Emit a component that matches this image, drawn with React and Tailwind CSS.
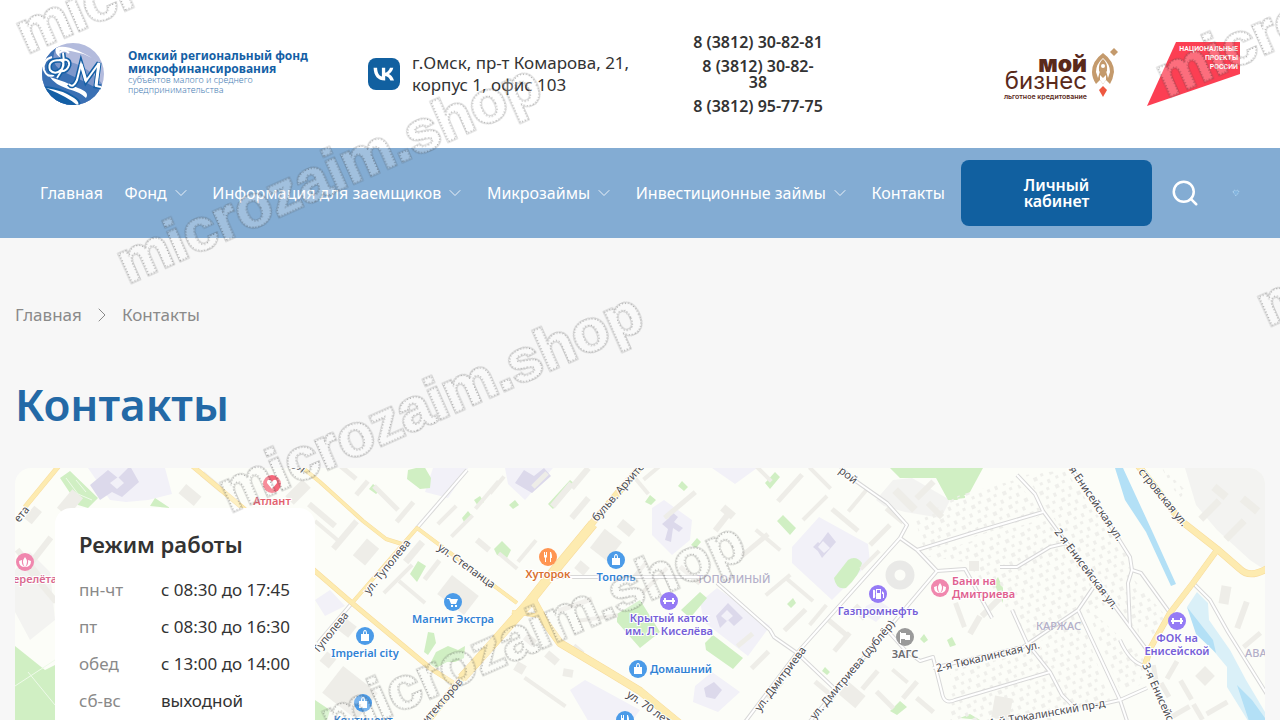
import { ChevronDown, ChevronRight, Search } from "lucide-react";

const menu = [
  { title: "Главная" },
  { title: "Фонд", sub: true },
  { title: "Информация для заемщиков", sub: true },
  { title: "Микрозаймы", sub: true },
  { title: "Инвестиционные займы", sub: true },
  { title: "Контакты" },
];

const schedule = [
  ["пн-чт", "с 08:30 до 17:45"],
  ["пт", "с 08:30 до 16:30"],
  ["обед", "с 13:00 до 14:00"],
  ["сб-вс", "выходной"],
];

// Map data: every point is in the map's own units
const yellowRoads = [
  { d: "M62 462L25 507", w: 5 },
  { d: "M190 464L243 508L315 571L352 603L430 668L458 686", w: 5 },
  { d: "M298 464L320 482L363 521L386 539L402 544", w: 4 },
  { d: "M352 603L417 528L517 603", w: 4 },
  { d: "M646 460L593 522L550 576L527 603L487 650L460 680L425 724", w: 7 },
  { d: "M593 524L550 576L527 605L487 650L462 678", w: 10 },
  { d: "M533 600L545 622L560 643L607 671L640 691L685 728", w: 8 },
  { d: "M512 612L540 616", w: 4 },
  { d: "M1137 464L1180 520L1217 549L1240 569Q1250 579 1268 568", w: 7 },
  { d: "M1217 550L1193 583L1170 613L1151 647L1145 665", w: 6 },
];

const whiteRoads = [
  "M467 470L417 528",
  "M352 603L318 643",
  "M553 577H705",
  "M840 466L850 477L887 503L907 525L900 538L797 653L742 726",
  "M900 538L917 550L937 571L965 569L992 618",
  "M917 550L975 532L1043 512",
  "M937 571L887 630L806 726",
  "M717 583L770 630L774 637L797 653L836 690",
  "M887 630L905 650L920 661L933 657L942 693Q944 705 955 700L1050 672",
  "M933 668L1023 647L1078 610L1093 588",
  "M1017 475L1035 494L1043 511L1057 530L1110 600L1147 650",
  "M1000 567H1017L1050 547L1067 543",
  "M1070 466L1115 533L1130 557L1132 570L1128 583L1130 628",
  "M1132 570L1141 573L1170 613",
  "M1078 610L1120 700L1128 724",
  "M1012 610L1027 643L1050 672L1062 695L1075 708",
  "M1085 708L1120 700L1147 688",
  "M1193 583L1210 600L1228 632L1268 696",
  "M1120 640Q1130 663 1145 666",
];

const parks = [
  "M60 478L70 471L98 498L88 508L78 505Z",
  "M150 506L155 498L170 508Z",
  "M408 470L424 466L431 478L430 488L420 489L407 479Z",
  "M369 489L373 484L381 490L376 494Z",
  "M548 504L570 480L575 484L553 509Z",
  "M462 518L468 511L472 516L464 522Z",
  "M474 500L480 496L484 502L478 506Z",
  "M494 549L502 541L511 550L507 558L497 555Z",
  "M410 574L418 561L426 566L417 582Z",
  "M424 652L428 632L434 633L436 643L428 655Z",
  "M430 664L436 652L448 646L458 650L465 646L464 658L455 662L447 662L436 668Z",
  "M509 505L515 500L519 505L513 509Z",
  "M678 486L682 481L688 487L684 491Z",
  "M765 483L775 472L780 477L770 489Z",
  "M645 502L650 495L656 500L651 505Z",
  "M777 521L783 515L796 528L790 535Z",
  "M834 578L848 560Q856 555 862 563Q860 575 846 588Q836 590 834 578Z",
  "M617 614L640 600L660 632L640 648L617 622Z",
  "M681 610L700 592L707 598L690 618Z",
  "M705 643L713 635L743 658L733 669L706 650Z",
  "M890 468H965V498L948 500L936 478L900 478Z",
  "M940 468H983L970 492L957 500L948 496Z",
  "M787 604L793 598L796 603L791 608Z",
  "M691 545L697 538L701 542L696 548Z",
  "M920 639L924 634L928 640L924 643Z",
  "M822 671L825 667L830 672L827 675Z",
  "M890 711L900 701L907 707L897 715Z",
  "M947 640L952 637L956 645L950 647Z",
  "M994 583L998 577L1003 588V603L997 590Z",
  "M15 646L45 670L55 665V724H15Z",
  "M315 700L330 710L326 724H315Z",
  "M960 718L970 714L980 720Z",
];

const lilac = [
  "M88 468H165L172 494L148 500L126 502L110 500Z",
  "M433 468H468L448 498L425 492Z",
  "M505 468H553L525 500L508 484Z",
  "M652 508L664 500L692 520L690 540L672 555L652 535Z",
  "M792 547L819 517L868 544L870 562L832 600L792 563Z",
  "M700 602L717 588L770 626L748 656L704 622Z",
  "M712 468H757L735 484Z",
  "M695 686L712 672L740 692L718 712L693 702Z",
  "M866 606L878 600L890 608L876 622L863 614Z",
  "M315 600L330 590L345 606L325 616Z",
  "M570 690L585 680L640 710L630 724H590Z",
];

const greyLand = [
  "M876 500L893 480L912 478L950 500L941 518L905 512L884 506Z",
  "M15 570L30 552L50 572L55 620L30 640L15 612Z",
  "M1185 468H1265V570L1250 560L1217 530L1196 505Z",
];

const lilacBlocks = [
  "M90 485L108 470L118 478L130 466L139 482L122 497L112 492L100 500Z",
  "M515 483L524 470L534 476L544 468L551 476L532 493Z",
  "M662 524L669 518L672 512L678 517L674 522L683 528L679 532L673 528L671 542L665 540L668 529Z",
  "M816 548L828 532L836 542L822 558Z",
  "M813 547L818 542L824 547L819 552Z",
  "M716 616L728 603L743 618L734 626L728 620L720 628Z",
  "M704 688L714 682L722 690L715 699L706 697Z",
];

// x, y, width, height, turn
const blocks = [
  [70, 503, 14, 24, 40], [33, 515, 10, 16, 40], [41, 550, 32, 6, -52], [30, 565, 6, 40, -40], [42, 585, 6, 44, -40],
  [190, 495, 20, 12, 40], [212, 482, 26, 6, 40], [298, 492, 24, 12, -45], [322, 515, 34, 6, 40], [345, 535, 36, 6, -50],
  [343, 468, 34, 5, 40], [362, 488, 5, 18, 40], [386, 498, 34, 5, 45], [405, 512, 5, 26, 40], [366, 552, 22, 16, -50],
  [328, 532, 34, 4, 40], [414, 552, 26, 7, -50], [432, 570, 5, 24, 38], [412, 592, 34, 4, 40], [398, 579, 4, 40, 45],
  [458, 595, 34, 24, 38], [447, 515, 4, 26, 45], [462, 526, 30, 4, -45], [487, 495, 36, 4, -50], [497, 485, 4, 22, 40],
  [483, 545, 16, 6, 40], [508, 561, 4, 24, -50], [527, 551, 28, 4, -50], [540, 480, 20, 5, -45], [562, 495, 30, 6, -50],
  [580, 478, 26, 6, -50], [580, 508, 26, 6, -50], [606, 545, 22, 24, 38], [626, 528, 16, 10, 40], [582, 568, 12, 10, 40],
  [347, 628, 14, 14, 38], [350, 693, 44, 34, 38], [328, 660, 12, 12, 40], [640, 484, 4, 26, -40], [655, 470, 30, 4, -40],
  [680, 505, 40, 5, -40], [728, 512, 14, 8, 40], [722, 522, 6, 22, 38], [760, 470, 4, 32, -45], [790, 488, 36, 5, -48],
  [820, 478, 30, 4, 45], [815, 508, 34, 4, -45], [845, 520, 34, 5, 40], [858, 500, 30, 4, -50], [880, 535, 5, 28, 45],
  [870, 560, 4, 26, 45], [905, 500, 28, 8, 45], [925, 490, 24, 6, -45], [895, 515, 22, 6, 40], [935, 510, 20, 6, 45],
  [755, 545, 5, 34, 50], [768, 540, 32, 4, 40], [778, 585, 32, 4, -40], [800, 590, 34, 4, 40], [795, 620, 5, 30, 45],
  [818, 615, 26, 4, -50], [838, 628, 24, 5, 40], [860, 612, 16, 8, 45], [842, 642, 5, 24, 40], [655, 580, 34, 4, -45],
  [690, 575, 26, 5, 40], [640, 570, 4, 20, 40], [760, 660, 24, 5, -45], [745, 640, 20, 5, -40], [775, 690, 22, 5, -50],
  [825, 690, 26, 5, 40], [852, 695, 22, 16, 40], [870, 680, 24, 5, -50], [885, 700, 24, 5, 45], [910, 690, 22, 5, -50],
  [900, 676, 20, 4, 40], [925, 705, 22, 5, 40], [530, 640, 12, 8, 40], [552, 658, 14, 8, 40], [520, 668, 10, 10, 30],
  [568, 673, 10, 8, 10], [578, 650, 12, 6, 40], [545, 692, 50, 4, 35], [598, 618, 40, 4, -8], [575, 605, 36, 5, -20],
  [960, 615, 5, 26, -20], [975, 625, 6, 20, 30], [991, 607, 26, 6, -45], [974, 566, 10, 10, 0], [1002, 708, 18, 22, 10],
  [1210, 510, 26, 7, -45], [1235, 530, 26, 7, -45], [1220, 492, 16, 8, 40], [1250, 505, 20, 8, 40], [1242, 615, 6, 28, 20],
  [1252, 640, 22, 5, -40], [1225, 595, 10, 18, 10], [1172, 670, 20, 5, -60], [1186, 690, 22, 5, 60], [1205, 676, 14, 14, 45],
  [1165, 690, 16, 5, 60], [1180, 712, 22, 5, -30], [1217, 708, 24, 5, -30], [1155, 675, 5, 20, -10], [1198, 712, 18, 5, 60],
];

const streets = [
  { t: "ета", x: 19, y: 523, a: -50 },
  { t: "ул", x: 293, y: 466, a: 40 },
  { t: "ул. Туполева", x: 369, y: 595, a: -51 },
  { t: "Туполева", x: 318, y: 654, a: -51 },
  { t: "ул. Степанца", x: 437, y: 549, a: 36 },
  { t: "бульв. Архитекторов", x: 597, y: 522, a: -49 },
  { t: "Архитекторов", x: 415, y: 738, a: -49 },
  { t: "ул. 70 лет Октября", x: 626, y: 696, a: 35 },
  { t: "ул. Дмитриева", x: 760, y: 712, a: -53 },
  { t: "ул. Дмитриева (дублёр)", x: 815, y: 720, a: -50 },
  { t: "2-я Тюкалинская ул.", x: 937, y: 672, a: -13 },
  { t: "2-я Енисейская ул.", x: 1054, y: 532, a: 53 },
  { t: "3-я Енисейская ул.", x: 1063, y: 461, a: 56 },
  { t: "стровская ул.", x: 1138, y: 472, a: 51 },
  { t: "3-я Енисейская ул.", x: 1142, y: 665, a: 66 },
  { t: "1-й Тюкалинский пр-д", x: 990, y: 727, a: -10 },
  { t: "рой", x: 838, y: 472, a: 38 },
];

const places = [
  { x: 272, y: 484, c: "#f5687a", k: "heart", text: ["Атлант"], tc: "#e3616d" },
  { x: 25, y: 562, c: "#f087ae", k: "lotus", text: ["Перелёта"], tc: "#d9688f", lx: 31 },
  { x: 365, y: 636, c: "#4b9be8", k: "bag", text: ["Imperial city"], tc: "#3182d4" },
  { x: 453, y: 602, c: "#4b9be8", k: "cart", text: ["Магнит Экстра"], tc: "#3182d4" },
  { x: 548, y: 557, c: "#ff9552", k: "food", text: ["Хуторок"], tc: "#d9702f" },
  { x: 616, y: 560, c: "#4b9be8", k: "bag", text: ["Тополь"], tc: "#3182d4" },
  { x: 669, y: 601, c: "#957bf5", k: "gym", text: ["Крытый каток", "им. Л. Киселёва"], tc: "#765fd8" },
  { x: 638, y: 669, c: "#4b9be8", k: "bag", text: ["Домашний"], tc: "#3182d4", side: true },
  { x: 878, y: 594, c: "#957bf5", k: "fuel", text: ["Газпромнефть"], tc: "#765fd8" },
  { x: 905, y: 637, c: "#9a9a9a", k: "flag", text: ["ЗАГС"], tc: "#6c6c70" },
  { x: 940, y: 588, c: "#f087ae", k: "lotus", text: ["Бани на", "Дмитриева"], tc: "#e0608f", side: true },
  { x: 1177, y: 621, c: "#957bf5", k: "gym", text: ["ФОК на", "Енисейской"], tc: "#765fd8" },
  { x: 363, y: 703, c: "#4b9be8", k: "bag", text: ["Континент"], tc: "#3182d4" },
  { x: 625, y: 720, c: "#4b9be8", k: "food", text: [], tc: "#3182d4" },
];

const glyphs = {
  heart: "M0 5L-5 -1Q-5 -5 -2 -4Q-1 -4 0 -2Q1 -4 2 -4Q5 -5 5 -1Z",
  lotus: "M0 -5Q4 0 0 5Q-4 0 0 -5M-3 -2Q-4 3 0 5Q-6 5 -6 -1ZM3 -2Q4 3 0 5Q6 5 6 -1Z",
  bag: "M-4 -2H-2Q-2 -6 0 -6Q2 -6 2 -2H4V5H-4ZM-1 -2H1Q1 -5 0 -5Q-1 -5 -1 -2Z",
  cart: "M-6 -4H-3L-2 -3H5L3 2H-2L-4 -3H-6ZM-2 3H0V5H-2ZM2 3H4V5H2Z",
  food: "M-4 -5H-3V-2H-2V-5H-1V0L-2 1V5H-3V1L-4 0ZM2 -5H3Q4 -3 4 1H3V5H2Z",
  gym: "M-5 -3H-3V-1H3V-3H5V-1H6V1H5V3H3V1H-3V3H-5V1H-6V-1H-5Z",
  fuel: "M-5 -4Q-2 -5 -3 0Q-2 5 -5 4ZM-2 -5H3V5H-2ZM-1 -4V-1H2V-4ZM4 -3L6 -1V4H5V0H4Z",
  flag: "M-5 -5H-4V-4H1V-2H5V3H0V2H-4V6H-5Z",
};

const marks = [[27, 54], [128, 284], [230, 513], [332, 742], [1167, 98], [1268, 327]];

function Place({ place }) {
  const { x, y, c, k, text, tc, side, lx } = place;
  return (
    <g>
      <circle cx={x} cy={y} r="9" fill={c} />
      <path d={glyphs[k]} transform={`translate(${x} ${y})`} fill="#fff" fillRule="evenodd" />
      <g fill={tc} stroke="#fff" strokeWidth="2" paintOrder="stroke" fontSize="11" fontWeight="600">
        {text.map((line, i) => (
          <text
            key={line}
            x={side ? x + 12 : lx || x}
            y={side ? y + 4 - (text.length - 1) * 7 + i * 13 : y + 21 + i * 13}
            textAnchor={side ? "start" : "middle"}
          >
            {line}
          </text>
        ))}
      </g>
    </g>
  );
}

function CityMap() {
  return (
    <svg
      viewBox="15 468 1250 400"
      preserveAspectRatio="xMinYMin slice"
      className="absolute inset-0 h-full w-full font-['Noto_Sans',sans-serif]"
      role="img"
      aria-label="Карта проезда"
    >
      <defs>
        <pattern id="houses" width="17" height="15" patternUnits="userSpaceOnUse" patternTransform="rotate(-24)">
          <path d="M1 2H5V6H1ZM9 1H12V4H9ZM5 9H8V12H5ZM13 9H16V13H13Z" fill="#efefeb" />
        </pattern>
      </defs>
      <rect x="15" y="468" width="1250" height="400" fill="#fcfdf8" />
      <path d={greyLand.join("")} fill="#f3f3f1" />
      <path d={lilac.join("")} fill="#f2f1f8" />
      <path d={parks.join("")} fill="#d0efc3" />
      <path d={lilacBlocks.join("")} fill="#dcd9eb" />
      <path d="M118 477L124 483L117 489L110 483Z" fill="#f2f1f8" />
      <path d="M823 541L830 548L824 553L818 547ZM727 610L733 616L727 621L721 616Z" fill="#f2f1f8" />
      <path d="M66 478L78 494L92 500M76 480L86 492M15 686L55 660M28 672L55 705" fill="none" stroke="#eefae9" strokeWidth="1" />
      <path
        d="M915 520L960 495L1015 480L1045 515L925 552ZM925 556L1045 518L1105 605L1030 640L1000 600L965 562ZM1025 475L1065 470L1130 560L1140 640L1115 600L1055 520ZM950 670L1020 655L1080 615L1110 700L1060 720H950ZM1085 605L1145 660L1140 685L1120 690ZM1130 575L1165 615L1155 640L1136 620ZM1160 465L1185 490L1180 500Z"
        fill="url(#houses)"
      />
      <g fill="#eeede8">
        {blocks.map(([x, y, w, h, a], i) => (
          <rect key={i} x={x - w / 2} y={y - h / 2} width={w} height={h} transform={`rotate(${a} ${x} ${y})`} />
        ))}
      </g>
      <circle cx="900" cy="575" r="10" fill="none" stroke="#e9e9e7" strokeWidth="9" />

      <path d="M1115 468H1123L1153 533L1176 584L1171 586L1146 532L1125 500Z" fill="#b3e0f6" />
      <path d="M1187 607L1197 592L1208 603L1209 620L1230 650L1246 680L1265 712V724H1250L1227 687V667L1207 643Z" fill="#daf0f8" />
      <path d="M1187 607L1213 640L1216 653L1196 634ZM1237 685L1252 700L1265 718V724H1250Z" fill="#b3e0f6" />

      <g fill="none" strokeLinejoin="round">
        {whiteRoads.map((d) => (
          <path key={d} d={d} stroke="#d8d8d8" strokeWidth="4" />
        ))}
        {whiteRoads.map((d) => (
          <path key={d} d={d} stroke="#fff" strokeWidth="2" />
        ))}
        {yellowRoads.map((r) => (
          <path key={r.d} d={r.d} stroke="#f8dc9c" strokeWidth={r.w} />
        ))}
        {yellowRoads.map((r) => (
          <path key={r.d} d={r.d} stroke="#fdebb0" strokeWidth={r.w - 1} />
        ))}
      </g>

      <g fill="#4c4c50" stroke="#fff" strokeWidth="2" paintOrder="stroke" fontSize="11">
        {streets.map((s, i) => (
          <text key={i} transform={`translate(${s.x} ${s.y}) rotate(${s.a})`}>
            {s.t}
          </text>
        ))}
      </g>
      <g fill="#b3afc9" fontSize="11" fontWeight="500">
        <text x="697" y="583">ТОПОЛИНЫЙ</text>
        <text x="1036" y="630">КАРЖАС</text>
        <text x="1245" y="657">АВАНГАРД</text>
      </g>
      {places.map((p) => (
        <Place key={p.x} place={p} />
      ))}
    </svg>
  );
}

function FundLogo() {
  return (
    <svg viewBox="0 0 64 64" className="h-16 w-16 shrink-0" aria-hidden="true">
      <defs>
        <clipPath id="disc">
          <circle cx="33" cy="32" r="31" />
        </clipPath>
      </defs>
      <g clipPath="url(#disc)">
        <rect width="64" height="64" fill="#b3bbdd" />
        <path d="M0 0H20Q14 14 30 20Q48 24 64 44V64H0Z" fill="#7d97cb" />
        <path d="M0 10L16 6Q8 22 24 30Q42 38 60 48L50 64H0Z" fill="#3a70b4" />
        <path d="M0 44Q20 44 34 54Q42 58 40 64H0Z" fill="#145fa5" />
        <path d="M16 6Q28 0 62 22Q42 8 20 8Q18 12 21 16Q14 12 16 6Z" fill="#fff" />
        <path d="M10 35Q24 39 38 46Q50 50 46 56Q40 50 28 47Q14 42 10 35Z" fill="#fff" />
        <path d="M6 46Q22 48 34 56Q40 60 38 64Q30 56 6 46Z" fill="#fff" />
      </g>
      <path d="M19 11Q24 6 29 11M12 15Q2 18 4 28Q7 36 14 33" fill="none" stroke="#fff" strokeWidth="2" />
      <path
        d="M23 11Q26 24 17 36M20 18Q7 18 10 28Q15 34 22 27Q26 20 20 18Q30 16 29 23Q27 30 20 29"
        fill="none"
        stroke="#145fa5"
        strokeWidth="5"
      />
      <path
        d="M23 11Q26 24 17 36M20 18Q7 18 10 28Q15 34 22 27Q26 20 20 18Q30 16 29 23Q27 30 20 29"
        fill="none"
        stroke="#fff"
        strokeWidth="2"
      />
      <path d="M29 42Q33 47 37 38L41 22L46 39L59 21L56 44L61 45" fill="none" stroke="#145fa5" strokeWidth="5" />
      <path d="M29 42Q33 47 37 38L41 22L46 39L59 21L56 44L61 45" fill="none" stroke="#fff" strokeWidth="2" />
      <path d="M41 22L46 39M59 21L56 44" fill="none" stroke="#fff" strokeWidth="3" />
    </svg>
  );
}

function BusinessLogo() {
  return (
    <svg viewBox="0 0 116 52" className="h-[52px] w-[116px]" role="img" aria-label="Мой бизнес">
      <g fill="#5a2a1b" textAnchor="end" fontFamily="Inter, sans-serif">
        <text x="84" y="24" fontSize="23" fontWeight="900">мой</text>
        <text x="84" y="41" fontSize="24">бизнес</text>
        <text x="84" y="51" fontSize="7" fontWeight="600">льготное кредитование</text>
      </g>
      <path
        d="M100 5Q111 13 111 24Q110 31 107 36L103 32L100 36L97 32L93 36Q89 30 89 24Q89 13 100 5ZM100 10Q93 16 93 24L95 30L97 23H103L105 30L107 24Q107 16 100 10Z"
        fill="#c49a6c"
        fillRule="evenodd"
      />
      <path d="M100 11Q105 15 104 23L100 27L96 23Q95 15 100 11Z" fill="#c49a6c" />
      <circle cx="100" cy="18" r="2" fill="#fff" />
      <path d="M97 32V27L100 30L103 27V32L100 36Z" fill="#fff" />
      <path d="M100 38L104 42L100 49L96 42Z" fill="#ee5840" />
      <path d="M111 0L115 4L111 8L107 4Z" fill="#c49a6c" />
    </svg>
  );
}

function ProjectsLogo() {
  return (
    <svg viewBox="0 0 93 65" className="h-[65px] w-[93px]" role="img" aria-label="Национальные проекты России">
      <path d="M29 0H93V32L0 64Z" fill="#fc3f53" />
      <g fill="#fff" textAnchor="end" fontFamily="Roboto, sans-serif" fontWeight="600" fontSize="7">
        <text x="91" y="9">НАЦИОНАЛЬНЫЕ</text>
        <text x="91" y="18">ПРОЕКТЫ</text>
        <text x="91" y="27">РОССИИ</text>
      </g>
    </svg>
  );
}

function Header() {
  return (
    <header>
      <div className="grid grid-cols-[328px_323px_134px_1fr] items-center bg-white px-10 py-[34px]">
        <a href="#" className="flex items-center gap-6">
          <FundLogo />
          <span className="whitespace-nowrap pb-1">
            <span className="block text-[12px] font-bold leading-[13px] text-[#145fa5]">
              Омский региональный фонд
              <br />
              микрофинансирования
            </span>
            <span className="block text-[9px] font-light leading-[10px] text-[#4a80b5]">
              субъектов малого и среднего
              <br />
              предпринимательства
            </span>
          </span>
        </a>

        <div className="flex items-center gap-3">
          <a href="#" aria-label="ВКонтакте" className="flex h-8 w-8 items-center justify-center rounded-lg bg-[#1160a0]">
            <svg viewBox="0 0 24 16" className="h-4 w-6" aria-hidden="true">
              <path
                d="M12.8 14.5C5.800 14.500 1.800 9.700 1.600 1.700H5.100C5.200 7.600 7.800 10 9.900 10.600V1.700H13.200V6.700C15.200 6.500 17.300 4.200 18 1.700H21.300C20.700 4.800 18.400 7.100 16.800 8.100C18.400 8.800 21 10.800 22 14.500H18.400C17.600 12.100 15.700 10.200 13.200 9.900V14.500Z"
                fill="#fff"
              />
            </svg>
          </a>
          <p className="text-[17px] leading-[22px]">
            г.Омск, пр-т Комарова, 21,
            <br />
            корпус 1, офис 103
          </p>
        </div>

        <div className="flex flex-col gap-2 whitespace-nowrap text-center text-base font-semibold leading-4">
          <a href="tel:83812308281">8 (3812) 30-82-81</a>
          <a href="tel:83812308238">
            8 (3812) 30-82-
            <br />
            38
          </a>
          <a href="tel:83812957775">8 (3812) 95-77-75</a>
        </div>

        <div className="flex items-center justify-end gap-7">
          <a href="#">
            <BusinessLogo />
          </a>
          <a href="#">
            <ProjectsLogo />
          </a>
        </div>
      </div>

      <nav className="flex items-center bg-[#83acd3] px-10 py-3 text-white">
        <ul className="flex flex-1 items-center justify-between whitespace-nowrap text-base">
          {menu.map((item) => (
            <li key={item.title}>
              <a href="#" className="flex items-center gap-1">
                {item.title}
                {item.sub && <ChevronDown size={20} strokeWidth={1} />}
              </a>
            </li>
          ))}
        </ul>
        <button className="ml-4 h-[66px] w-[191px] rounded-lg bg-[#1160a0] text-base font-semibold leading-4">
          Личный
          <br />
          кабинет
        </button>
        <button aria-label="Поиск" className="ml-[18px]">
          <Search size={30} strokeWidth={2} />
        </button>
        <button aria-label="Версия для слабовидящих" className="ml-8">
          <svg viewBox="0 0 8 8" className="h-2 w-2" aria-hidden="true">
            <path d="M1 3L2 1L4 2L6 1L7 3L4 7Z" fill="#83b4de" stroke="#b5d8f2" strokeWidth="1" strokeDasharray="1 1" />
          </svg>
        </button>
      </nav>
    </header>
  );
}

function Watermark() {
  return (
    <svg className="pointer-events-none absolute inset-0 h-full w-full" aria-hidden="true">
      <g fontFamily="Liberation Sans, Arial, sans-serif" fontWeight="700" fontSize="60">
        <g className="opacity-25">
          {marks.map(([x, y]) => (
            <g key={x} transform={`translate(${x} ${y}) rotate(-24)`}>
              <text stroke="#444" strokeWidth="3">microzaim.shop</text>
              <text stroke="#fff" strokeWidth="1" fill="#fff">microzaim.shop</text>
            </g>
          ))}
        </g>
        <g className="opacity-45" fill="none" stroke="#222" strokeWidth="1" strokeDasharray="1 2">
          {marks.map(([x, y]) => (
            <text key={x} transform={`translate(${x} ${y}) rotate(-24)`}>
              microzaim.shop
            </text>
          ))}
        </g>
      </g>
    </svg>
  );
}

export default function App() {
  return (
    <div className="relative min-h-screen overflow-hidden bg-[#f7f7f7] font-['Noto_Sans',sans-serif] text-[#333]">
      <Header />

      <main className="px-[15px] pt-16">
        <nav className="flex items-center gap-2 text-[17px] leading-[26px] text-[#8a8a8a]">
          <a href="#">Главная</a>
          <ChevronRight size={24} strokeWidth={1} />
          <span>Контакты</span>
        </nav>

        <h1 className="mt-[46px] text-[44px] font-semibold leading-[60px] text-[#2369a6]">Контакты</h1>

        <section className="relative mt-[34px] h-[400px] overflow-hidden rounded-2xl">
          <CityMap />
          <div className="relative ml-10 mt-10 w-[260px] rounded-2xl bg-white p-6">
            <h2 className="text-[22px] font-semibold leading-6">Режим работы</h2>
            <table className="mt-[15px] w-full whitespace-nowrap text-left text-[17px] leading-[37px]">
              <tbody>
                {schedule.map(([day, time]) => (
                  <tr key={day}>
                    <th scope="row" className="w-[82px] font-normal text-[#8a8a8a]">{day}</th>
                    <td>{time}</td>
                  </tr>
                ))}
              </tbody>
            </table>
          </div>
        </section>
      </main>

      <Watermark />
    </div>
  );
}
